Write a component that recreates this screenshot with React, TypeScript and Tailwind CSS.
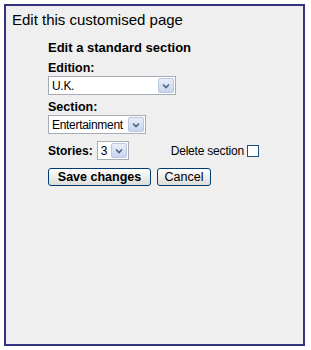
import React from "react";

function Arrow() {
  return (
    <span className="flex h-[15px] w-[16px] shrink-0 items-center justify-center rounded-[2px] border border-[#b9c7e0] bg-gradient-to-b from-[#e9eef8] to-[#c9d5ec]">
      <svg width="8" height="6" viewBox="0 0 8 6">
        <path d="M1 1.5 L4 4.5 L7 1.5" fill="none" stroke="#4d6185" strokeWidth="1.6" />
      </svg>
    </span>
  );
}

function FakeSelect({ value, width }: { value: string; width: string }) {
  return (
    <div className={`flex h-[19px] items-center justify-between border border-[#a5acb5] bg-white pl-[3px] pr-[1px] ${width}`}>
      <span className="text-[12px] leading-none tracking-[-0.3px] text-black">{value}</span>
      <Arrow />
    </div>
  );
}

export default function App() {
  return (
    <div className="h-[350px] w-[311px] bg-white p-[4px] font-['Liberation_Sans',Arial,sans-serif]">
      <div className="h-[342px] w-[301px] border-2 border-[#33337f] bg-[#efefef]">
        <h1 className="pl-[6px] pt-[5px] text-[15px] leading-[18px] text-black">Edit this customised page</h1>
        <div className="pl-[42px] pt-[11px]">
          <h2 className="text-[13px] font-bold leading-[16px] text-black">Edit a standard section</h2>
          <div className="mt-[5px] text-[12.5px] font-bold leading-[15px]">Edition:</div>
          <FakeSelect value="U.K." width="w-[128px]" />
          <div className="mt-[5px] text-[12.5px] font-bold leading-[15px]">Section:</div>
          <FakeSelect value="Entertainment" width="w-[98px]" />
          <div className="mt-[7px] flex items-center">
            <span className="text-[12px] font-bold">Stories:</span>
            <div className="ml-[4px]">
              <FakeSelect value="3" width="w-[32px]" />
            </div>
            <span className="ml-[42px] text-[12px] tracking-[-0.2px]">Delete section</span>
            <span className="ml-[3px] h-[12px] w-[12px] border border-[#1c5180] bg-white" />
          </div>
          <div className="mt-[8px] flex gap-[6px]">
            <button className="h-[18px] w-[103px] rounded-[3px] border border-[#003c74] bg-gradient-to-b from-white to-[#dcdcd8] text-[12.5px] font-bold leading-none text-black">
              Save changes
            </button>
            <button className="h-[18px] w-[54px] rounded-[3px] border border-[#003c74] bg-gradient-to-b from-white to-[#dcdcd8] text-[12.5px] leading-none text-black">
              Cancel
            </button>
          </div>
        </div>
      </div>
    </div>
  );
}
